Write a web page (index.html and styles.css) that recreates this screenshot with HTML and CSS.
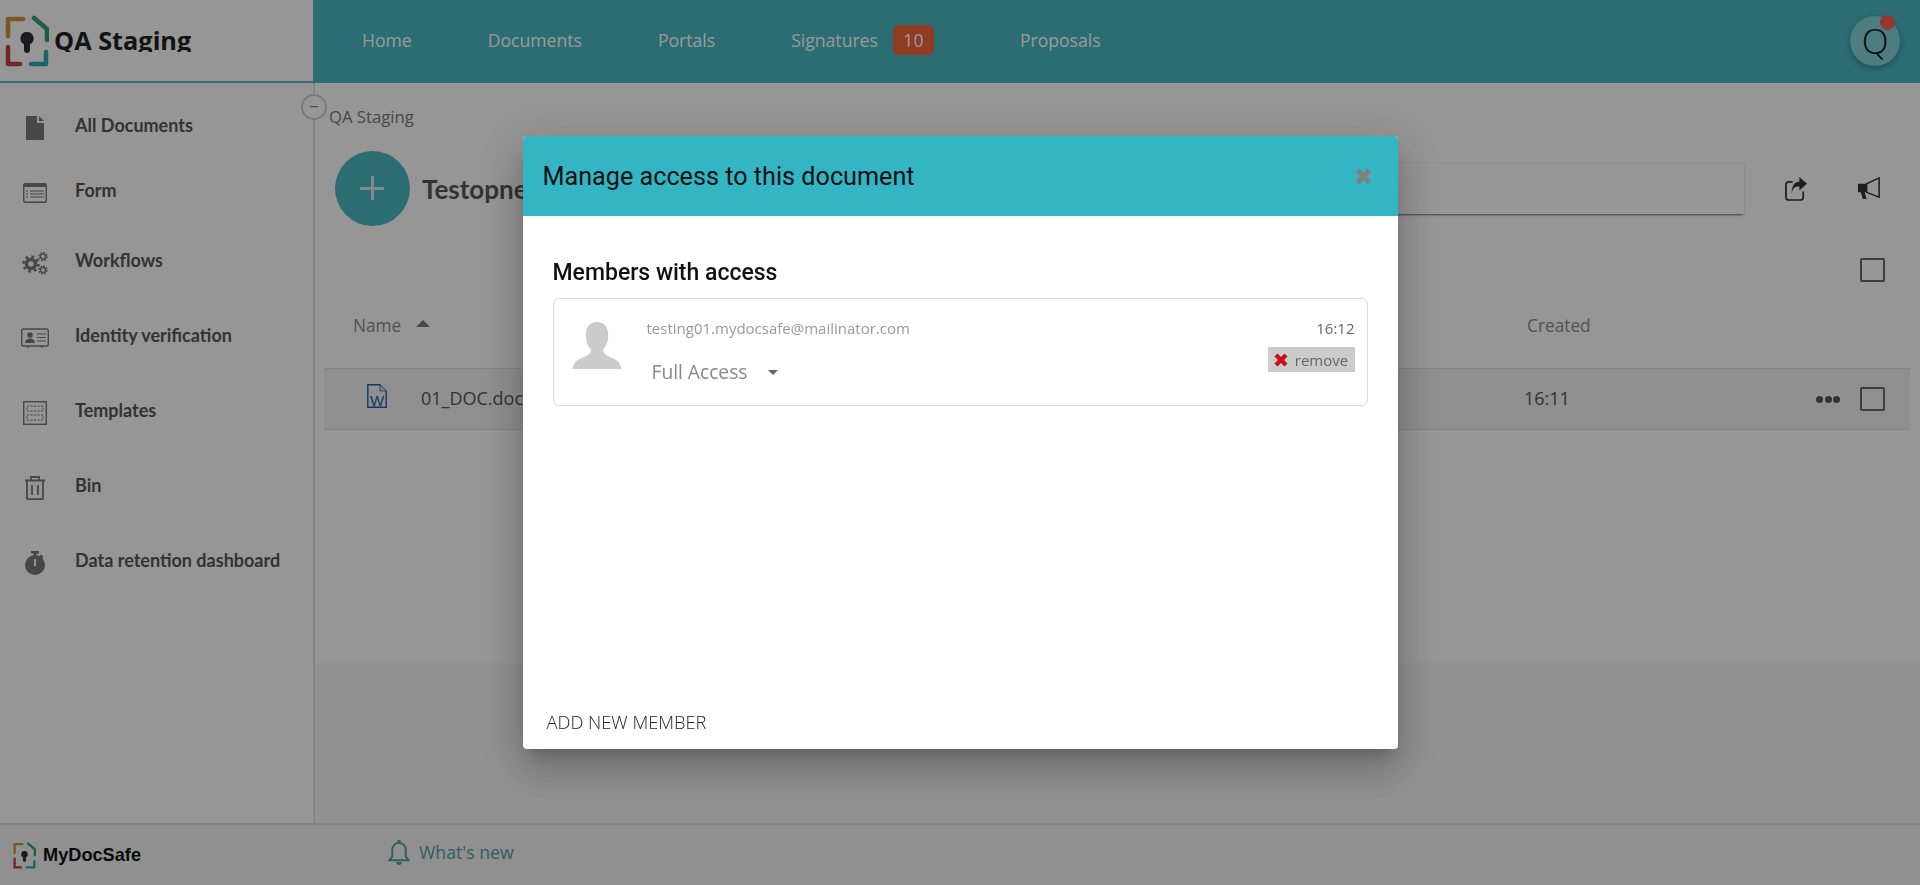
FILE: index.html
```html
<!DOCTYPE html>
<html lang="en">
<head>
    <meta charset="UTF-8">
    <title>QA Staging - Documents</title>
    <link rel="stylesheet" href="styles.css">
</head>
<body>
    <svg class="defs" width="0" height="0">
        <symbol id="logo" viewBox="4 15 44 52">
            <g fill="none" stroke-width="4.500" stroke-linecap="round" stroke-linejoin="round">
                <path d="M7 36V19H22" stroke="#d0923a"/>
                <path d="M33 18L46 29V40" stroke="#2f9e6e"/>
                <path d="M7 47V64H19" stroke="#c2403c"/>
                <path d="M45 52V64H30" stroke="#2fa6ad"/>
            </g>
            <path d="M26 32a6.500 6.500 0 0 1 3 12.300V50a3 3 0 0 1-6 0V44.300A6.500 6.500 0 0 1 26 32z" fill="#2c2c34"/>
        </symbol>
        <symbol id="cross" viewBox="0 0 16 16">
            <path d="M4 .5L8 4.500 12 .5 15.500 4 11.500 8 15.500 12 12 15.500 8 11.500 4 15.500 .5 12 4.500 8 .5 4z"/>
        </symbol>
    </svg>

    <header class="topbar">
        <div class="brand">
            <svg class="brand-logo"><use href="#logo"/></svg>
            <span class="brand-name">QA Staging</span>
        </div>
        <nav class="topnav">
            <a>Home</a>
            <a>Documents</a>
            <a>Portals</a>
            <a>Signatures <span class="badge">10</span></a>
            <a>Proposals</a>
        </nav>
        <div class="account">Q<span class="dot"></span></div>
    </header>

    <div class="layout">
        <aside class="sidebar">
            <div class="side-item">
                <svg viewBox="0 0 18 24" height="24"><path d="M0 0h11v7h7v17H0z" fill="#777"/><path d="M13 0l5 5h-5z" fill="#777"/></svg>
                <span>All Documents</span>
            </div>
            <div class="side-item">
                <svg viewBox="0 0 24 20" height="20"><rect x=".7" y=".7" width="22.600" height="18.600" rx="1.500" fill="none" stroke="#777" stroke-width="1.400"/><path d="M1 1h22v3H1z" fill="#777"/><path d="M7 8h14M7 11h14M7 14h14M3 8h2M3 11h2M3 14h2" stroke="#777" stroke-width="1.100"/></svg>
                <span>Form</span>
            </div>
            <div class="side-item">
                <svg viewBox="0 0 26 24" height="24"><g fill="none" stroke="#777"><circle cx="9" cy="13" r="4.500" stroke-width="3.500"/><circle cx="9" cy="13" r="7.500" stroke-width="2.500" stroke-dasharray="2.800 3.100"/><circle cx="21" cy="5.500" r="2.500" stroke-width="1.300"/><circle cx="21" cy="5.500" r="4" stroke-width="1.500" stroke-dasharray="1.800 1.300"/><circle cx="21" cy="19" r="2.500" stroke-width="1.300"/><circle cx="21" cy="19" r="4" stroke-width="1.500" stroke-dasharray="1.800 1.300"/></g></svg>
                <span>Workflows</span>
            </div>
            <div class="side-item">
                <svg viewBox="0 0 28 20" height="20"><rect x=".7" y="1" width="26.600" height="17" rx="1.500" fill="none" stroke="#777" stroke-width="1.400"/><circle cx="9" cy="7" r="2.800" fill="#777"/><path d="M4 15c0-3 2.200-4.500 5-4.500s5 1.500 5 4.500z" fill="#777"/><path d="M16 6h9M16 9.500h9M16 13h9M7 18v2M21 18v2" stroke="#777" stroke-width="1.200"/></svg>
                <span>Identity verification</span>
            </div>
            <div class="side-item">
                <svg viewBox="0 0 24 24" height="24"><rect x=".7" y=".7" width="22.600" height="22.600" fill="none" stroke="#777" stroke-width="1.400"/><path d="M4 5h16v5H4zM4 14h16v5H4z" fill="none" stroke="#777" stroke-width="1" stroke-dasharray="2.200 1.300"/></svg>
                <span>Templates</span>
            </div>
            <div class="side-item">
                <svg viewBox="0 0 20 24" height="24"><path d="M0 4.500h20M6 4.500V1h8v3.500M2 4.500v18a.7.7 0 0 0 .7.7h14.600a.7.7 0 0 0 .7-.7v-18M7 9v10M13 9v10" fill="none" stroke="#777" stroke-width="1.800"/></svg>
                <span>Bin</span>
            </div>
            <div class="side-item">
                <svg viewBox="0 0 20 24" height="24"><path d="M6 0h8v2.500h-2.500V6h-3V2.500H6zM16 3.500l2.500 2.500-2 2-2.500-2.500z" fill="#777"/><circle cx="10" cy="14" r="10" fill="#777"/><path d="M10 8v7" stroke="#fafafa" stroke-width="2"/></svg>
                <span>Data retention dashboard</span>
            </div>
            <button class="collapse">&minus;</button>
        </aside>

        <main class="content">
            <div class="crumb">QA Staging</div>
            <div class="title-row">
                <div class="add-btn"></div>
                <h1 class="folder-name">Testopnew</h1>
                <div class="search"></div>
                <svg class="tool" viewBox="0 0 24 26" width="23" height="25"><path d="M8 6H4a3 3 0 0 0-3 3v13a3 3 0 0 0 3 3h12a3 3 0 0 0 3-3v-6" fill="none" stroke="#333" stroke-width="1.800"/><path d="M15 1l8 7-8 7v-4c-5 0-7 2-8 7 0-8 3-12 8-12z" fill="#333"/></svg>
                <svg class="tool" viewBox="0 0 26 26" width="25" height="25"><path d="M1 8h9v9H8l2 7H6l-2-7H1z" fill="#333"/><path d="M10 8l13-6v20l-13-5z" fill="none" stroke="#333" stroke-width="1.600"/></svg>
            </div>
            <div class="select-all"><span class="check"></span></div>
            <div class="table-head">
                <span class="col-name">Name <i class="sort"></i></span>
                <span class="col-created">Created</span>
            </div>
            <div class="file-row">
                <svg class="file-icon" viewBox="0 0 20 24" width="20" height="24"><path d="M.8.8h12l6.400 6.400v16H.8z" fill="none" stroke="#1e5fa8" stroke-width="1.400"/><path d="M13 1v6h6" fill="#cfe0f0" stroke="#1e5fa8" stroke-width=".8"/></svg>
                <span class="file-w">W</span>
                <span class="col-name file-name">01_DOC.docx</span>
                <span class="col-created">16:11</span>
                <span class="more"><i></i><i></i><i></i></span>
                <span class="check"></span>
            </div>
        </main>
    </div>

    <footer class="footer">
        <div class="foot-brand">
            <svg class="foot-logo"><use href="#logo"/></svg>
            <span>MyDocSafe</span>
        </div>
        <div class="whats-new">
            <svg viewBox="0 0 22 26" width="22" height="25"><path d="M11 3a7 7 0 0 1 7 7v7l3 4H1l3-4v-7a7 7 0 0 1 7-7z" fill="none" stroke="#4a9ea6" stroke-width="2"/><path d="M9.500 0h3v3h-3zM8 23h6a3 3 0 0 1-6 0z" fill="#4a9ea6"/></svg>
            <span>What's new</span>
        </div>
    </footer>

    <div class="overlay">
        <div class="modal">
            <div class="modal-head">
                <h2>Manage access to this document</h2>
                <svg class="close"><use href="#cross"/></svg>
            </div>
            <div class="modal-body">
                <h3>Members with access</h3>
                <div class="member">
                    <svg class="avatar" viewBox="0 0 48 46"><path d="M24 0c8 0 11 6 11 13 0 6-2 11-5 14 0 4 3 6 8 8 6 2 9 5 10 11H0c1-6 4-9 10-11 5-2 8-4 8-8-3-3-5-8-5-14C13 6 16 0 24 0z" fill="#ccc"/></svg>
                    <div class="member-info">
                        <div class="email">testing01.mydocsafe@mailinator.com</div>
                        <div class="role">Full Access <i class="caret"></i></div>
                    </div>
                    <div class="member-side">
                        <div class="time">16:12</div>
                        <div class="remove"><svg class="remove-x"><use href="#cross"/></svg> remove</div>
                    </div>
                </div>
            </div>
            <div class="modal-foot">ADD NEW MEMBER</div>
        </div>
    </div>
</body>
</html>
```

FILE: styles.css
```css
* { box-sizing: border-box; }
html, body { height: 100%; }
body { margin: 0; display: flex; flex-direction: column; height: 100vh; overflow: hidden; background: #fafafa; font-family: "Open Sans", sans-serif; color: #333; }
.defs { position: absolute; }

/* top bar */
.topbar { display: flex; height: 83px; background: #49b6c0; flex-shrink: 0; }
.brand { width: 313px; background: #fafafa; border-bottom: 2px solid #5fb4bc; display: flex; padding-left: 5px; padding-top: 15px; }
.brand-logo { width: 44px; height: 52px; flex-shrink: 0; }
.brand-name { margin-left: 5px; height: 30px; margin-top: 7px; line-height: 37px; overflow: hidden; font-size: 25.300px; font-weight: 700; color: #222; white-space: nowrap; }
.topnav { display: flex; align-items: center; gap: 76px; padding: 0 0 4px 49px; flex: 1; color: #fff; font-size: 17.600px; }
.topnav a { display: flex; align-items: center; }
.badge { margin-left: 15px; margin-right: 10px; width: 41px; height: 30px; border-radius: 6px; background: #f2633a; color: #fff; display: flex; align-items: center; justify-content: center; }
.account { position: relative; width: 50px; height: 50px; margin: 16px 20px 0 0; border-radius: 50%; background: #7fd0d8; box-shadow: 0 2px 6px rgba(0,0,0,.3); color: #111; font-size: 35px; line-height: 50px; text-align: center; font-weight: 300; }
.dot { position: absolute; top: -1px; right: 5px; width: 15px; height: 15px; border-radius: 50%; background: #ff5b52; }

/* sidebar */
.layout { flex: 1; display: flex; min-height: 0; }
.sidebar { position: relative; width: 315px; flex-shrink: 0; border-right: 2px solid #ddd; padding-top: 9px; display: grid; grid-template-rows: 66px 64px 76px 74px 76px 74px 76px; align-content: start; }
.side-item { display: flex; align-items: center; font-family: Lato, sans-serif; font-weight: 700; font-size: 18px; color: #555; }
.side-item svg { margin-left: 21px; width: 28px; margin-top: 6px; flex-shrink: 0; }
.side-item span { margin-left: 26px; }
.collapse { position: absolute; top: 11px; right: -14px; width: 26px; height: 26px; padding: 0; border-radius: 50%; border: 2px solid #ccc; background: #fafafa; color: #777; font-size: 16px; line-height: 20px; }

/* main */
.content { flex: 1; padding: 0 10px 0 9px; min-width: 0; background: linear-gradient(#fafafa 580px, #f2f2f2 580px); }
.crumb { margin: 23px 0 0 5px; font-size: 16.700px; line-height: 22px; color: #777; }
.title-row { display: flex; align-items: center; margin: 23px 0 0 11px; }
.add-btn { position: relative; width: 75px; height: 75px; border-radius: 50%; background: #49b6c0; flex-shrink: 0; }
.add-btn::before, .add-btn::after { content: ""; position: absolute; background: #cfe9ec; }
.add-btn::before { left: 25px; top: 36px; width: 24px; height: 3px; }
.add-btn::after { left: 36px; top: 25px; width: 3px; height: 24px; }
.folder-name { margin: 0 0 0 12px; font: 700 26px Lato, sans-serif; color: #555; }
.search { flex: 1; height: 51px; margin: 0 41px 0 20px; background: #fafafa; box-shadow: 0 2px 2px -1px rgba(0,0,0,.55), 0 0 2px rgba(0,0,0,.12); }
.tool { margin-right: 49px; }
.tool:last-child { margin-right: 28px; }
.select-all { display: flex; justify-content: flex-end; margin-top: 32px; padding-right: 25px; }
.check { display: block; width: 25px; height: 24px; border: 2px solid #666; border-radius: 2px; flex-shrink: 0; }
.table-head { display: flex; margin-top: 23px; height: 40px; font-size: 17.300px; color: #888; align-items: center; padding-left: 29px; }
.col-name { width: 1174px; }
.sort { display: inline-block; margin-left: 10px; vertical-align: 5px; border: 7px solid transparent; border-top: 0; border-bottom-color: #777; }
.file-row { position: relative; display: flex; align-items: center; height: 62px; margin-top: 23px; padding: 0 25px 0 97px; background: #eee; border-top: 1px solid #ddd; border-bottom: 1px solid #ddd; font-size: 16px; color: #555; }
.file-icon { position: absolute; left: 43px; top: 15px; }
.file-w { position: absolute; left: 46px; top: 23px; font: 400 15px "Liberation Sans", sans-serif; color: #1e5fa8; }
.file-name { width: 1103px; margin-top: -2px; font-size: 18px; }
.file-row .col-created { margin-top: -2px; font-size: 18px; }
.more { display: flex; gap: 1.500px; margin: 0 20px 0 auto; }
.more i { width: 7px; height: 7px; border-radius: 50%; background: #555; }

/* footer */
.footer { height: 62px; flex-shrink: 0; background: #f0f0f0; border-top: 2px solid #ddd; display: flex; align-items: center; }
.foot-brand { width: 388px; display: flex; align-items: center; padding-left: 13px; font: 700 18.200px "Liberation Sans", sans-serif; color: #111; }
.foot-logo { width: 23px; height: 27px; margin-right: 7px; }
.whats-new { display: flex; align-items: center; gap: 9px; color: #4a9ea6; font-size: 17.700px; margin-top: -6px; }

/* modal */
.overlay { position: fixed; inset: 0; display: flex; align-items: center; justify-content: center; background: rgba(0,0,0,.4); }
.modal { width: 875px; height: 613px; display: flex; flex-direction: column; background: #fff; border-radius: 4px; overflow: hidden; }
.overlay .modal { box-shadow: 0 11px 15px -7px rgba(0,0,0,.2), 0 24px 38px 3px rgba(0,0,0,.14), 0 9px 46px 8px rgba(0,0,0,.12); }
.modal-head { display: flex; align-items: center; justify-content: space-between; height: 80px; padding: 0 26px 0 20px; background: #33b5c4; flex-shrink: 0; }
.modal-head h2 { margin: 0; font: 400 25.200px Roboto, sans-serif; color: #111; }
.close { width: 17px; height: 17px; fill: #808080; }
.modal-body { flex: 1; padding: 43px 30px 0 30px; }
.modal-body h3 { margin: 0 0 11px; font: 500 23px/28px Roboto, sans-serif; color: #111; }
.member { display: flex; height: 108px; border: 1px solid #ddd; border-radius: 6px; padding: 23px 12px 0 18px; }
.avatar { width: 50px; height: 47px; flex-shrink: 0; }
.member-info { margin-left: 25px; flex: 1; margin-top: -4px; }
.email { font-size: 15px; line-height: 20px; color: #999; }
.role { margin: 20px 0 0 5px; font-size: 19.200px; line-height: 28px; color: #888; display: flex; align-items: center; }
.caret { margin-left: 21px; border: 5px solid transparent; border-bottom: 0; border-top-color: #666; }
.member-side { display: flex; flex-direction: column; align-items: flex-end; margin-top: -4px; }
.time { font-size: 15px; line-height: 20px; color: #666; }
.remove { margin-top: 9px; height: 25px; width: 87px; display: flex; align-items: center; justify-content: center; gap: 7px; background: #ccc; font-size: 15px; color: #666; white-space: nowrap; }
.remove-x { width: 14px; height: 14px; fill: #c8101f; }
.modal-foot { padding: 0 0 15px 24px; font-size: 18.300px; font-weight: 300; color: #222; line-height: 24px; }
```
